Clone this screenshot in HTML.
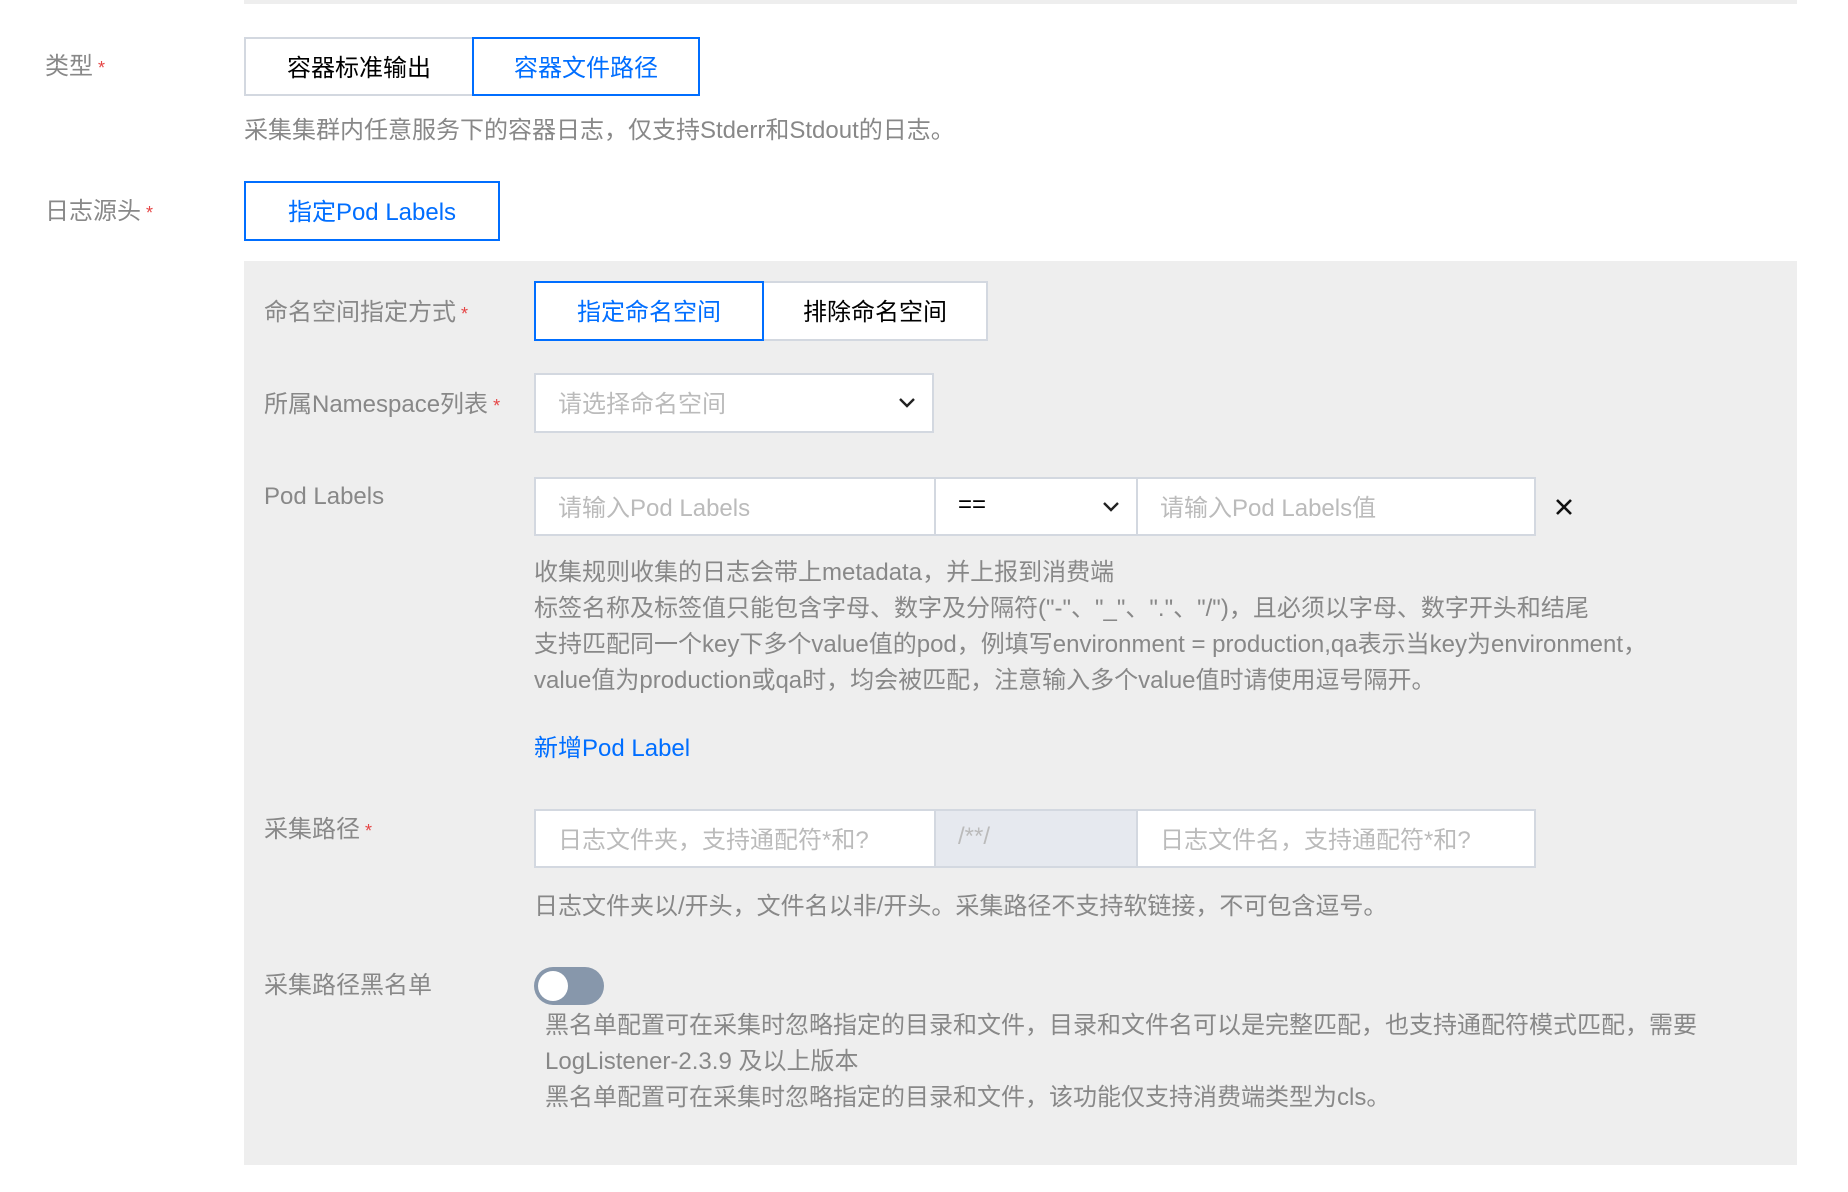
<!DOCTYPE html>
<html><head><meta charset="utf-8"><style>
*{margin:0;padding:0;box-sizing:border-box}
body{width:1848px;height:1192px;background:#fff;font-family:"Liberation Sans","Noto Sans CJK SC",sans-serif;font-size:24px;color:#000;position:relative;overflow:hidden}
.a{position:absolute;white-space:nowrap}
.lbl{color:#888;line-height:30px}
.req:after{content:" *";color:#e54545;font-size:18px}
.btn{position:absolute;border:2px solid #d3d8e0;background:#fff;display:flex;align-items:center;justify-content:center;color:#000;padding-bottom:3px}
.btn.on{border-color:#006eff;color:#006eff;z-index:2}
.inp{position:absolute;border:2px solid #d3d8e0;background:#fff;color:#bbb;display:flex;align-items:center;padding-left:22px;padding-bottom:3px}
.help{color:#888;line-height:36px}
</style></head><body>
<div class="a" style="left:244px;top:0;width:1553px;height:4px;background:#eee"></div>

<div class="a lbl req" style="left:45px;top:52px">类型</div>
<div class="btn" style="left:244px;top:37px;width:230px;height:59px">容器标准输出</div>
<div class="btn on" style="left:472px;top:37px;width:228px;height:59px">容器文件路径</div>
<div class="a help" style="left:244px;top:113px">采集集群内任意服务下的容器日志，仅支持Stderr和Stdout的日志。</div>

<div class="a lbl req" style="left:45px;top:197px">日志源头</div>
<div class="btn on" style="left:244px;top:181px;width:256px;height:60px">指定Pod Labels</div>

<div class="a" style="left:244px;top:261px;width:1553px;height:904px;background:#eee"></div>

<div class="a lbl req" style="left:264px;top:298px">命名空间指定方式</div>
<div class="btn on" style="left:534px;top:281px;width:230px;height:60px">指定命名空间</div>
<div class="btn" style="left:762px;top:281px;width:226px;height:60px">排除命名空间</div>

<div class="a lbl req" style="left:264px;top:390px">所属Namespace列表</div>
<div class="inp" style="left:534px;top:373px;width:400px;height:60px">请选择命名空间
<svg style="position:absolute;right:16px;top:22px" width="18" height="12" viewBox="0 0 18 12"><path d="M2 2 L9 9 L16 2" fill="none" stroke="#222" stroke-width="2.4"/></svg></div>

<div class="a lbl" style="left:264px;top:482px">Pod Labels</div>
<div class="inp" style="left:534px;top:477px;width:402px;height:59px">请输入Pod Labels</div>
<div class="inp" style="left:934px;top:477px;width:204px;height:59px;color:#000">==
<svg style="position:absolute;right:16px;top:22px" width="18" height="12" viewBox="0 0 18 12"><path d="M2 2 L9 9 L16 2" fill="none" stroke="#222" stroke-width="2.4"/></svg></div>
<div class="inp" style="left:1136px;top:477px;width:400px;height:59px">请输入Pod Labels值</div>
<svg class="a" style="left:1555px;top:498px" width="18" height="18" viewBox="0 0 18 18"><path d="M2 2L16 16M16 2L2 16" stroke="#111" stroke-width="2.6"/></svg>

<div class="a help" style="left:534px;top:555px">收集规则收集的日志会带上metadata，并上报到消费端<br>标签名称及标签值只能包含字母、数字及分隔符("-"、"_"、"."、"/")，且必须以字母、数字开头和结尾<br>支持匹配同一个key下多个value值的pod，例填写environment = production,qa表示当key为environment，<br>value值为production或qa时，均会被匹配，注意输入多个value值时请使用逗号隔开。</div>

<div class="a" style="left:534px;top:734px;color:#006eff;line-height:30px">新增Pod Label</div>

<div class="a lbl req" style="left:264px;top:815px">采集路径</div>
<div class="inp" style="left:534px;top:809px;width:402px;height:59px">日志文件夹，支持通配符*和?</div>
<div class="inp" style="left:934px;top:809px;width:204px;height:59px;background:#e6e9ef">/**/</div>
<div class="inp" style="left:1136px;top:809px;width:400px;height:59px">日志文件名，支持通配符*和?</div>
<div class="a help" style="left:534px;top:889px">日志文件夹以/开头，文件名以非/开头。采集路径不支持软链接，不可包含逗号。</div>

<div class="a lbl" style="left:264px;top:971px">采集路径黑名单</div>
<div class="a" style="left:534px;top:967px;width:70px;height:38px;border-radius:19px;background:#8797ab"></div>
<div class="a" style="left:538px;top:971px;width:30px;height:30px;border-radius:50%;background:#fff"></div>
<div class="a help" style="left:545px;top:1008px">黑名单配置可在采集时忽略指定的目录和文件，目录和文件名可以是完整匹配，也支持通配符模式匹配，需要<br>LogListener-2.3.9 及以上版本<br>黑名单配置可在采集时忽略指定的目录和文件，该功能仅支持消费端类型为cls。</div>
</body></html>
